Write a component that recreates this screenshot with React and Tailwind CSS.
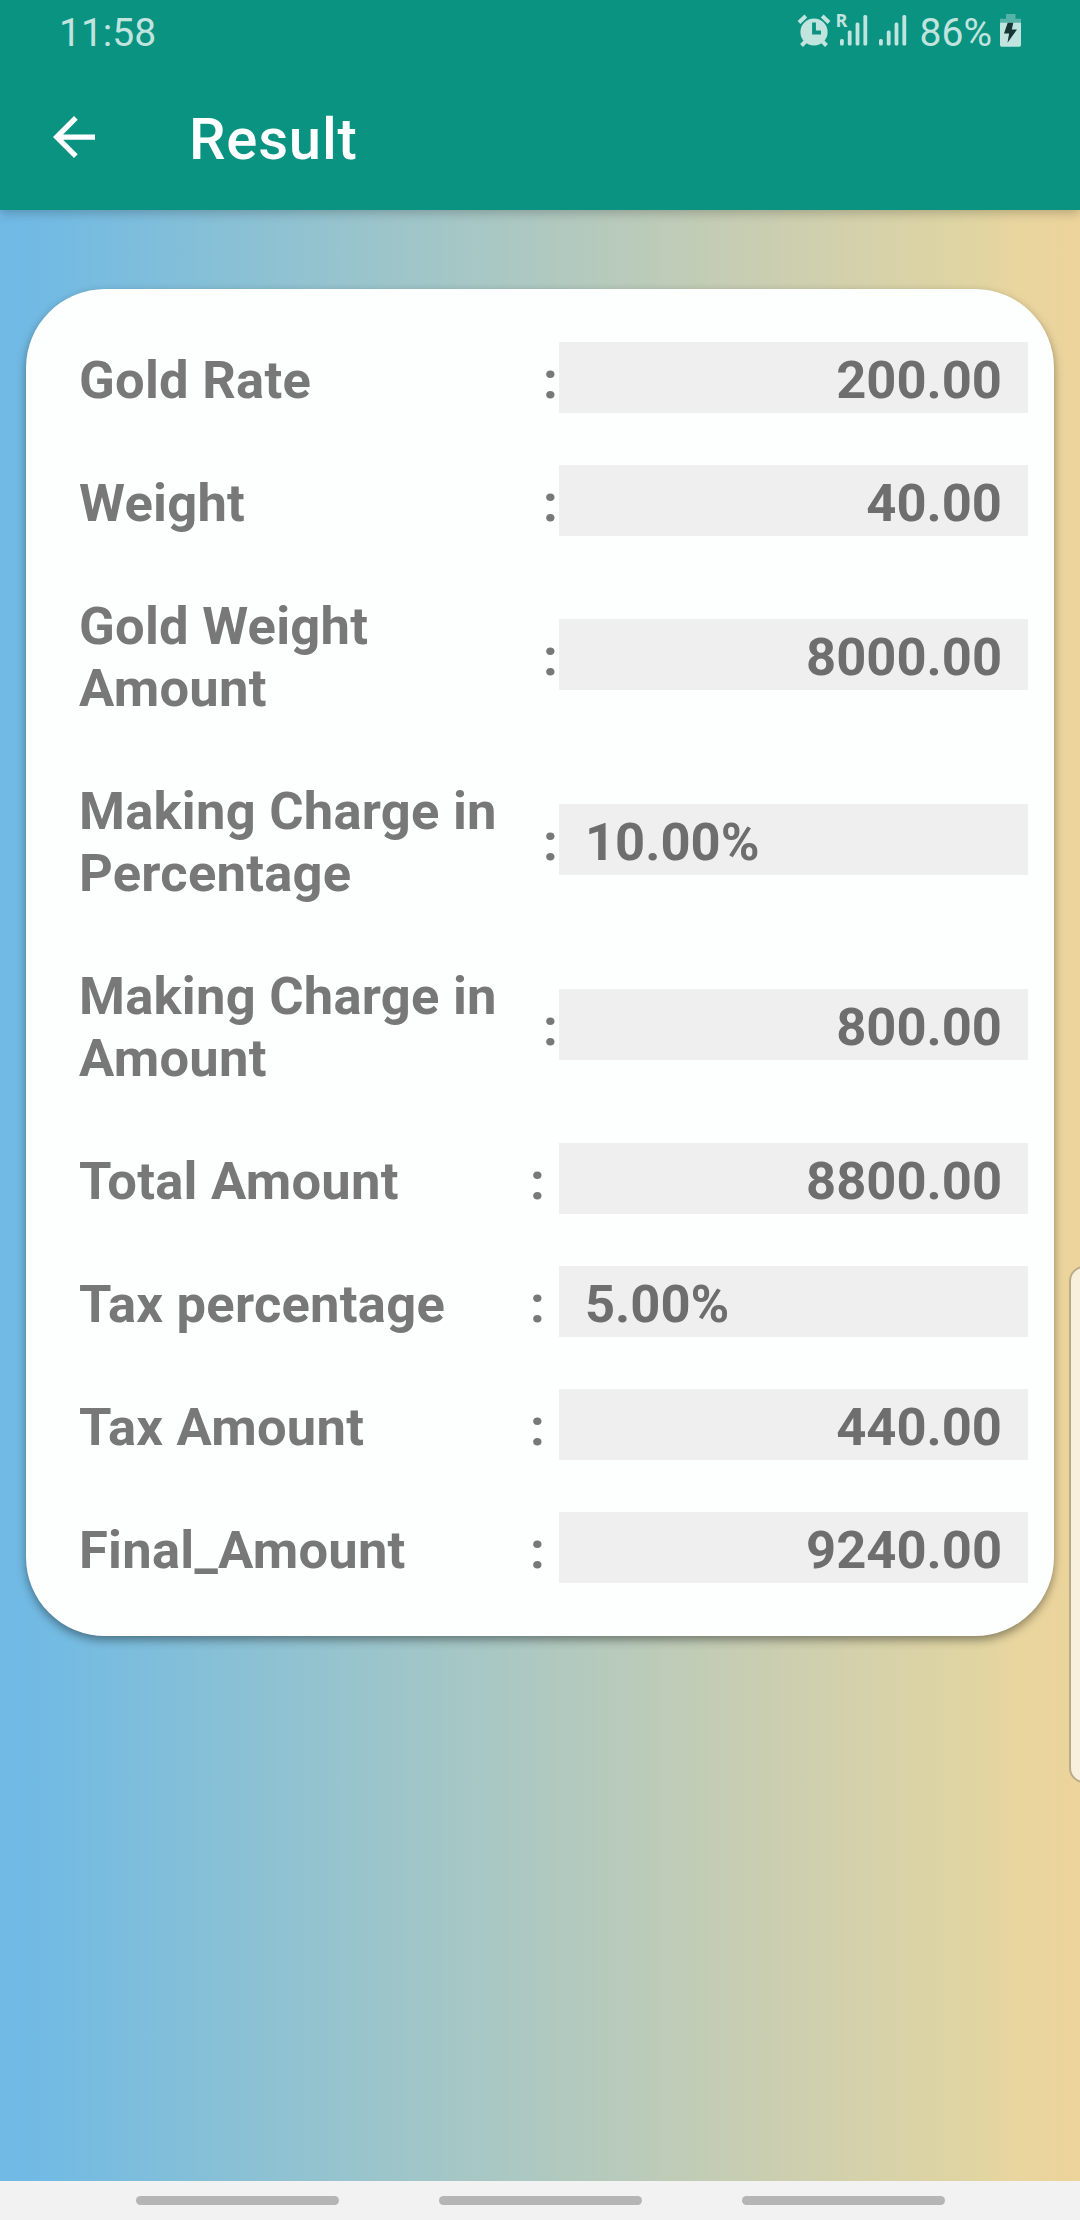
const rows = [
  { label: ["Gold Rate"], value: "200.00" },
  { label: ["Weight"], value: "40.00" },
  { label: ["Gold Weight", "Amount"], value: "8000.00" },
  { label: ["Making Charge in", "Percentage"], value: "10.00%", left: true },
  { label: ["Making Charge in", "Amount"], value: "800.00" },
  { label: ["Total Amount"], value: "8800.00", gap: true },
  { label: ["Tax percentage"], value: "5.00%", left: true, gap: true },
  { label: ["Tax Amount"], value: "440.00", gap: true },
  { label: ["Final_Amount"], value: "9240.00", gap: true },
];

function AlarmIcon() {
  return (
    <svg width="34" height="34" viewBox="0 0 34 34" fill="none" className="shrink-0">
      <circle cx="17" cy="18" r="13.6" fill="#c1e4df" />
      <path d="M2 8.5 8.8 2M32 8.5 25.2 2" stroke="#c1e4df" strokeWidth="4" />
      <path d="M4.5 31.5 9 27M29.5 31.5 25 27" stroke="#c1e4df" strokeWidth="4" />
      <path d="M17 8.5V18.5H24" stroke="#0b9382" strokeWidth="3.8" />
    </svg>
  );
}

function SignalIcon() {
  return (
    <svg width="28" height="32" viewBox="0 0 28 32" fill="#c1e4df" className="shrink-0">
      <rect x="0" y="25" width="3.8" height="6.4" rx="1.5" />
      <rect x="7.8" y="16.5" width="3.8" height="14.9" rx="1.5" />
      <rect x="15.6" y="8.5" width="3.8" height="22.9" rx="1.5" />
      <rect x="23.4" y="1" width="3.8" height="30.4" rx="1.5" />
    </svg>
  );
}

function BatteryIcon() {
  return (
    <svg width="22" height="33" viewBox="0 0 22 33" className="shrink-0">
      <path d="M6 0h9.5v4.8H21V9H0V4.8h6z" fill="#56b3a7" />
      <path d="M0 8.8h21V31a1.7 1.7 0 0 1-1.7 1.7H1.7A1.7 1.7 0 0 1 0 31z" fill="#c1e4df" />
      <path d="M7.7 8.8h5.6L11.8 15.5H17L7.5 28.8l1.6-9.3H4z" fill="#173532" />
    </svg>
  );
}

export default function App() {
  return (
    <main className="relative flex h-[2220px] w-[1080px] flex-col overflow-hidden bg-[linear-gradient(90deg,#70b9e5_0%,#73bbe3_5%,#84bfd8_18%,#9bc5cb_35%,#b1c9bf_52%,#c6cdb3_68%,#d5d1aa_80%,#e1d5a1_91%,#e9d59f_94%,#ecd49b_100%)] font-['Roboto',sans-serif]">
      {/* Header */}
      <header className="relative h-[210px] shrink-0 bg-[#0b9382] shadow-[0_3px_10px_rgba(0,0,0,0.22)]">
        <div className="flex h-[63px] items-start pl-[59px] text-[#c1e4df]">
          <span className="mt-[10px] text-[39px] leading-[46px]">11:58</span>
          <div className="ml-auto flex items-start pr-[58px]">
            <div className="mt-[14px]"><AlarmIcon /></div>
            <div className="relative mt-[14px] ml-[9px]">
              <SignalIcon />
              <span className="absolute -top-[4px] -left-[4px] font-['Open_Sans',sans-serif] text-[18px] leading-5 font-bold">R</span>
            </div>
            <div className="mt-[14px] ml-[11px]"><SignalIcon /></div>
            <span className="mt-[10px] ml-[13px] text-[39px] leading-[46px]">86%</span>
            <div className="mt-[14px] ml-[8px]"><BatteryIcon /></div>
          </div>
        </div>
        <div className="flex h-[147px] items-center text-white">
          <svg width="42" height="42" viewBox="0 0 16 16" className="ml-[53px]" fill="currentColor">
            <path d="M16 7H3.83l5.59-5.59L8 0 0 8l8 8 1.41-1.41L3.83 9H16z" />
          </svg>
          <h1 className="ml-[94px] pt-[4px] text-[58px] leading-[68px] font-medium tracking-[0.8px]">Result</h1>
        </div>
      </header>

      {/* Result card */}
      <section className="mx-[26px] mt-[79px] flex h-[1347px] shrink-0 flex-col gap-[52px] rounded-[79px] bg-[#fdfffe] pt-[53px] pr-[26px] pl-[53px] text-[52.5px] leading-[62px] font-bold text-[#787878] shadow-[0_4px_10px_rgba(0,0,0,0.4)]">
        {rows.map((row) => (
          <div
            key={row.label.join(" ")}
            className={row.label.length > 1 ? "flex h-[133px] items-center" : "flex h-[71px] items-center"}
          >
            <div className="w-[464px] pt-[5px] tracking-[0.25px]">
              {row.label.map((line) => (
                <div key={line}>{line}</div>
              ))}
            </div>
            <span className={row.gap ? "-ml-[13px] w-[29px] pt-[5px]" : "w-[16px] pt-[5px]"}>:</span>
            <div
              className={
                row.left
                  ? "h-[71px] flex-1 bg-[#efefef] px-[26px] pt-[7px] text-left text-[#6e6e6e]"
                  : "h-[71px] flex-1 bg-[#efefef] px-[26px] pt-[7px] text-right text-[#6e6e6e]"
              }
            >
              {row.value}
            </div>
          </div>
        ))}
      </section>

      {/* Edge panel handle */}
      <div className="absolute top-[1266px] left-[1069px] h-[517px] w-[30px] rounded-[16px] border-2 border-[#b9ab88] bg-[#f8efdc]" />

      {/* Navigation bar */}
      <nav className="mt-auto flex h-[39px] shrink-0 items-start justify-center gap-[100px] bg-[#f2f2f2] pt-[15px]">
        <div className="h-[9px] w-[203px] rounded-full bg-[#b5b5b5]" />
        <div className="h-[9px] w-[203px] rounded-full bg-[#b5b5b5]" />
        <div className="h-[9px] w-[203px] rounded-full bg-[#b5b5b5]" />
      </nav>
    </main>
  );
}
